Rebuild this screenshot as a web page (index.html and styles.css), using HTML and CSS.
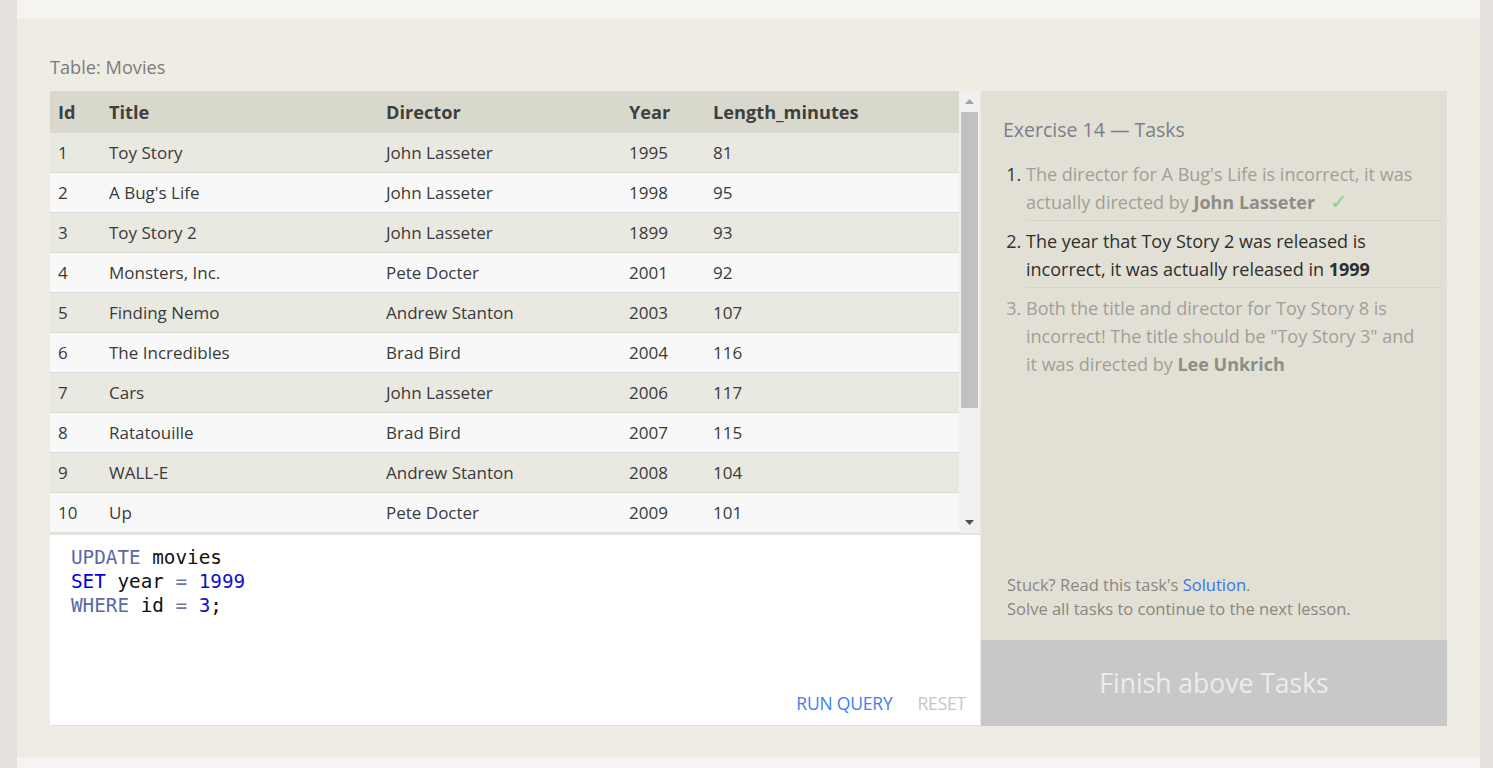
FILE: index.html
```html
<!DOCTYPE html>
<html lang="en">
<head>
<meta charset="utf-8">
<title>SQL Lesson 14</title>
<link rel="stylesheet" href="styles.css">
</head>
<body>
<div class="wrap">
  <div class="card">
    <div class="table-label">Table: Movies</div>
    <div class="workspace">
      <div class="left">
        <div class="table-view">
          <div class="table-scroll">
            <table class="movies">
              <colgroup>
                <col class="c-id"><col class="c-title"><col class="c-dir"><col class="c-year"><col class="c-len">
              </colgroup>
              <thead>
                <tr><th>Id</th><th>Title</th><th>Director</th><th>Year</th><th>Length_minutes</th></tr>
              </thead>
              <tbody>
                <tr><td>1</td><td>Toy Story</td><td>John Lasseter</td><td>1995</td><td>81</td></tr>
                <tr><td>2</td><td>A Bug's Life</td><td>John Lasseter</td><td>1998</td><td>95</td></tr>
                <tr><td>3</td><td>Toy Story 2</td><td>John Lasseter</td><td>1899</td><td>93</td></tr>
                <tr><td>4</td><td>Monsters, Inc.</td><td>Pete Docter</td><td>2001</td><td>92</td></tr>
                <tr><td>5</td><td>Finding Nemo</td><td>Andrew Stanton</td><td>2003</td><td>107</td></tr>
                <tr><td>6</td><td>The Incredibles</td><td>Brad Bird</td><td>2004</td><td>116</td></tr>
                <tr><td>7</td><td>Cars</td><td>John Lasseter</td><td>2006</td><td>117</td></tr>
                <tr><td>8</td><td>Ratatouille</td><td>Brad Bird</td><td>2007</td><td>115</td></tr>
                <tr><td>9</td><td>WALL-E</td><td>Andrew Stanton</td><td>2008</td><td>104</td></tr>
                <tr><td>10</td><td>Up</td><td>Pete Docter</td><td>2009</td><td>101</td></tr>
                <tr><td>11</td><td>Toy Story 8</td><td>El Directore</td><td>2010</td><td>103</td></tr>
              </tbody>
            </table>
          </div>
          <div class="scrollbar">
            <div class="sb-btn"><svg width="9" height="5" viewBox="0 0 9 5"><path d="M0 5 L4.5 0 L9 5 Z" fill="#a3a3a3"/></svg></div>
            <div class="sb-track"><div class="sb-thumb"></div></div>
            <div class="sb-btn"><svg width="9" height="5" viewBox="0 0 9 5"><path d="M0 0 L4.5 5 L9 0 Z" fill="#505050"/></svg></div>
          </div>
        </div>
        <div class="editor">
<pre class="code"><span class="kw">UPDATE</span> movies
<span class="kw2">SET</span> year <span class="op">=</span> <span class="num">1999</span>
<span class="kw">WHERE</span> id <span class="op">=</span> <span class="num">3</span>;</pre>
          <div class="editor-actions">
            <span class="btn-run">RUN QUERY</span>
            <span class="btn-reset">RESET</span>
          </div>
        </div>
      </div>
      <div class="panel">
        <div class="panel-body">
          <div class="panel-title">Exercise 14 — Tasks</div>
          <ol class="tasks">
            <li class="done">The director for A Bug's Life is incorrect, it was actually directed by <b>John Lasseter</b> <span class="check">✓</span></li>
            <li class="active">The year that Toy Story 2 was released is incorrect, it was actually released in <b>1999</b></li>
            <li class="todo">Both the title and director for Toy Story 8 is incorrect! The title should be "Toy Story 3" and<br>it was directed by <b>Lee Unkrich</b></li>
          </ol>
          <div class="stuck">
            <div>Stuck? Read this task's <span class="link">Solution</span>.</div>
            <div>Solve all tasks to continue to the next lesson.</div>
          </div>
        </div>
        <div class="finish">Finish above Tasks</div>
      </div>
    </div>
  </div>
</div>
</body>
</html>
```

FILE: styles.css
```css
html, body {
  margin: 0;
  padding: 0;
}
body {
  background: #e4e0dd;
  font-family: "Open Sans", "Noto Sans", sans-serif;
  color: #333;
  height: 768px;
  overflow: hidden;
}
.wrap {
  margin: 0 13px 0 17px;
  background: #f5f4f0;
  padding: 18px 0 40px;
}
.card {
  background: #efece4;
  border-radius: 4px;
  padding: 37px 33px 32px;
}
.table-label {
  font-size: 18.2px;
  line-height: 24px;
  color: #7c7c7c;
  margin-bottom: 12px;
}
.workspace {
  display: flex;
  align-items: stretch;
  height: 635px;
}
.left {
  width: 930px;
  display: flex;
  flex-direction: column;
}
.table-view {
  display: flex;
  height: 442px;
  border-bottom: 2px solid #e6e5dc;
}
.table-scroll {
  flex: 1;
  overflow: hidden;
}
.movies {
  width: 100%;
  border-collapse: collapse;
  table-layout: fixed;
  font-size: 17px;
}
.c-id { width: 51px; }
.c-title { width: 277px; }
.c-dir { width: 243px; }
.c-year { width: 84px; }
.movies th {
  background: #d9d8cc;
  text-align: left;
  font-weight: 700;
  font-size: 18.2px;
  color: #3f3f3f;
  height: 42px;
  padding: 0 8px;
  white-space: nowrap;
}
.movies td {
  height: 39px;
  padding: 0 8px;
  border-bottom: 1px solid #dcdcd6;
  color: #3a3a3a;
  white-space: nowrap;
}
.movies tbody tr:nth-child(odd) td { background: #e9e8e1; }
.movies tbody tr:nth-child(even) td { background: #f8f8f8; }
.scrollbar {
  width: 20px;
  background: #f1f1f1;
  display: flex;
  flex-direction: column;
  margin-right: 1px;
}
.sb-btn {
  height: 21px;
  display: flex;
  align-items: center;
  justify-content: center;
}
.sb-track {
  flex: 1;
  padding: 0 1px 0 2px;
}
.sb-thumb {
  height: 296px;
  background: #c1c1c1;
}
.editor {
  flex: 1;
  background: #fff;
  border-bottom: 1px solid #e0dfd4;
  display: flex;
  flex-direction: column;
}
.code {
  margin: 0;
  padding: 11px 21px 0;
  font-family: "DejaVu Sans Mono", "Liberation Mono", monospace;
  font-size: 19.3px;
  line-height: 24px;
  color: #111;
  flex: 1;
}
.kw { color: #5a68a6; }
.kw2 { color: #0000e0; }
.num { color: #1010c8; }
.op { color: #6c78a0; }
.editor-actions {
  display: flex;
  justify-content: flex-end;
  gap: 25px;
  padding: 0 14px 10px 0;
  font-size: 17.5px;
  line-height: 24px;
  letter-spacing: -0.2px;
}
.btn-run { color: #3d7ef0; }
.btn-reset { color: #c6c6c6; }
.panel {
  width: 466px;
  margin-left: 1px;
  background: #e2e0d4;
  display: flex;
  flex-direction: column;
}
.panel-body {
  flex: 1;
  display: flex;
  flex-direction: column;
  padding: 25px 6px 19px 22px;
}
.panel-title {
  font-size: 19.5px;
  line-height: 28px;
  color: #7a7e8b;
  margin-bottom: 16px;
}
.tasks {
  margin: 0;
  padding: 0 0 0 23px;
  font-size: 18px;
  line-height: 28px;
}
.tasks li {
  padding: 6px 0 4px;
  border-bottom: 1px solid #d6d4c8;
}
.tasks li:first-child { padding-top: 0; }
.tasks li:last-child { border-bottom: none; }
.tasks li.done { color: #a09f9a; }
.tasks li.done::marker { color: #333; }
.tasks li.done b { color: #8e8d88; }
.tasks li.active { color: #2f2f2f; }
.tasks li.todo { color: #a09f9a; }
.tasks li.todo b { color: #8e8d88; }
.check {
  color: #90cf90;
  font-size: 21px;
  line-height: 1;
  margin-left: 10px;
}
.stuck {
  margin-top: auto;
  padding-left: 4px;
  font-size: 16.5px;
  line-height: 24px;
  color: #8a8680;
}
.link { color: #3b73e8; }
.finish {
  height: 86px;
  background: #c8c8c8;
  color: #ececec;
  font-size: 26.5px;
  display: flex;
  align-items: center;
  justify-content: center;
}
```
